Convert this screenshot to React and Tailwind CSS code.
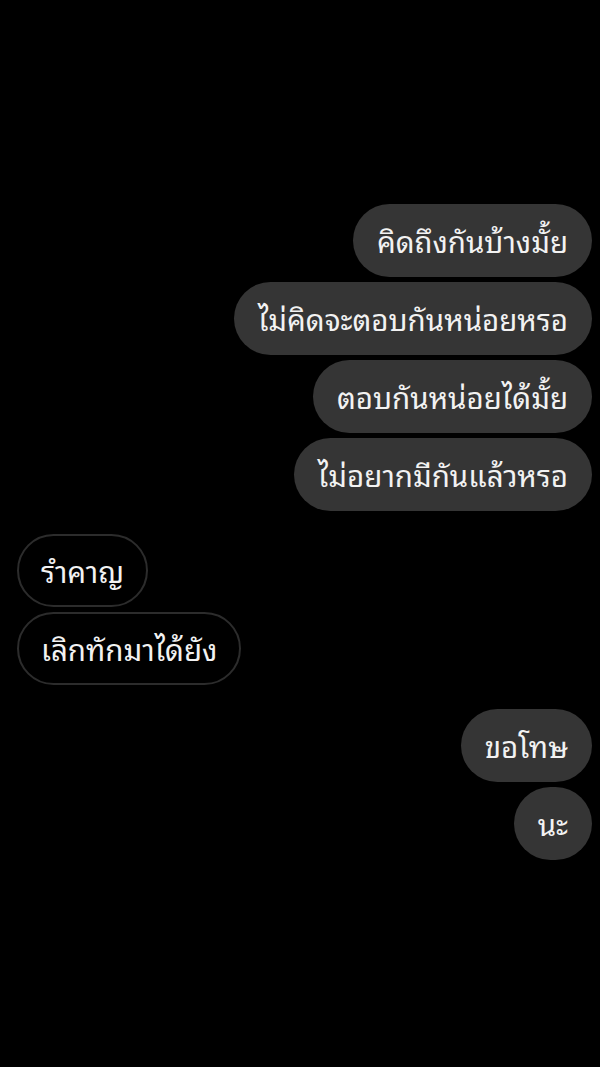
import React from "react";

const mine = [
  ["คิดถึงกันบ้างมั้ย", "mt-[204px]"],
  ["ไม่คิดจะตอบกันหน่อยหรอ", "mt-[5px]"],
  ["ตอบกันหน่อยได้มั้ย", "mt-[5px]"],
  ["ไม่อยากมีกันแล้วหรอ", "mt-[5px]"],
];

function Out({ text, className = "" }) {
  return (
    <div
      className={`self-end h-[73px] flex items-center px-[24px] rounded-full bg-[#353535] text-[#f2f2f2] text-[29.5px] ${className}`}
    >
      {text}
    </div>
  );
}

function In({ text, className = "" }) {
  return (
    <div
      className={`self-start h-[73px] flex items-center px-[22px] rounded-full border-2 border-[#2c2c2c] bg-black text-[#f2f2f2] text-[29.5px] ${className}`}
    >
      {text}
    </div>
  );
}

export default function App() {
  return (
    <div
      className="min-h-[1067px] w-[600px] bg-black flex flex-col pl-[17px] pr-[8px]"
      style={{
        fontFamily:
          '"Noto Sans Thai Looped", "Sarabun", "Garuda", "Loma", "Norasi", "Tlwg Typo", "Noto Serif Thai", "Noto Sans Thai", "Noto Sans", sans-serif',
      }}
    >
      {mine.map(([t, c]) => (
        <Out key={t} text={t} className={c} />
      ))}
      <In text="รำคาญ" className="mt-[23px]" />
      <In text="เลิกทักมาได้ยัง" className="mt-[5px]" />
      <Out text="ขอโทษ" className="mt-[24px]" />
      <Out text="นะ" className="mt-[5px]" />
    </div>
  );
}
